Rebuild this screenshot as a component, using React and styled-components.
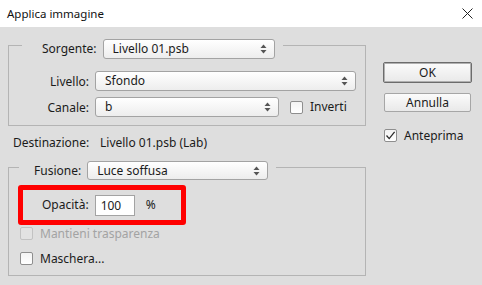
import React from "react";
import styled, { createGlobalStyle } from "styled-components";

const GlobalStyle = createGlobalStyle`
  html, body {
    margin: 0;
    padding: 0;
  }
  body {
    background: #dedede;
    font-family: "Noto Sans", "DejaVu Sans", sans-serif;
    font-size: 12px;
    color: #1b1b1b;
  }
`;

const Dialog = styled.div`
  width: 482px;
  height: 285px;
  background: #dedede;
  display: flex;
  flex-direction: column;
  overflow: hidden;
`;

const TitleBar = styled.div`
  height: 27px;
  flex-shrink: 0;
  box-sizing: border-box;
  background: #ffffff;
  display: flex;
  align-items: center;
  justify-content: space-between;
  padding: 0 9px 1px 7px;
  font-size: 11.5px;
  color: #111;
`;

const Body = styled.div`
  display: flex;
  gap: 17px;
  padding: 12px 0 0 8px;
`;

const LeftColumn = styled.div`
  width: 358px;
  display: flex;
  flex-direction: column;
`;

const RightColumn = styled.div`
  display: flex;
  flex-direction: column;
  align-items: flex-start;
  padding-top: 23px;
`;

const Group = styled.fieldset`
  margin: 0;
  min-width: 0;
  width: 358px;
  box-sizing: border-box;
  border: 1px solid #b4b4b4;
  padding: 0 8px ${(p) => p.$bottom}px ${(p) => p.$left}px;
`;

const Legend = styled.legend`
  height: 12px;
  display: flex;
  align-items: flex-start;
  gap: 6px;
  padding: 0 8px 0 ${(p) => p.$indent}px;
`;

const Label = styled.span`
  line-height: ${(p) => p.$h || 20}px;
  white-space: nowrap;
  color: ${(p) => (p.$disabled ? "#a3a3a3" : "#1b1b1b")};
`;

const SelectBox = styled.div`
  width: ${(p) => p.$w}px;
  height: ${(p) => p.$h || 20}px;
  box-sizing: border-box;
  flex-shrink: 0;
  border: 1px solid #a3a3a3;
  border-radius: 3px;
  background: linear-gradient(#ffffff, #ededed);
  display: flex;
  align-items: center;
  justify-content: space-between;
  padding: 0 7px 0 9px;
  line-height: 1;
`;

const Fields = styled.div`
  display: grid;
  grid-template-columns: 67px auto;
  column-gap: 6px;
  row-gap: 6px;
  align-items: center;
  margin-top: 20px;
`;

const FieldLabel = styled.span`
  text-align: right;
  white-space: nowrap;
`;

const Inline = styled.div`
  display: flex;
  align-items: center;
  gap: ${(p) => p.$gap}px;
`;

const DestRow = styled.div`
  display: flex;
  line-height: 15px;
  margin: 9px 0 11px 5px;
`;

const DestLabel = styled.span`
  width: 87px;
`;

const Highlight = styled.div`
  width: 168px;
  height: 40px;
  box-sizing: border-box;
  margin: 12px 0 0 -1px;
  border: 5px solid #ff0000;
  border-radius: 3px;
  display: flex;
  align-items: center;
  padding-left: 19px;
`;

const NumberInput = styled.div`
  width: 40px;
  height: 21px;
  box-sizing: border-box;
  margin: 0 11px 0 6px;
  border: 1px solid #a3a3a3;
  background: #ffffff;
  padding-left: 5px;
  display: flex;
  align-items: center;
`;

const CheckRow = styled.div`
  height: 13px;
  display: flex;
  align-items: center;
  gap: 7px;
  margin: ${(p) => p.$top}px 0 0 ${(p) => p.$left || 0}px;
`;

const Box = styled.div`
  width: 13px;
  height: 13px;
  box-sizing: border-box;
  flex-shrink: 0;
  border: 1px solid ${(p) => (p.$disabled ? "#c2c2c2" : "#8e8e8e")};
  border-radius: 2px;
  background: ${(p) =>
    p.$disabled ? "#e2e2e2" : "linear-gradient(#f3f3f3, #ffffff)"};
  display: flex;
  align-items: center;
  justify-content: center;
`;

const Button = styled.div`
  width: ${(p) => (p.$default ? 89 : 87)}px;
  height: ${(p) => (p.$default ? 21 : 19)}px;
  box-sizing: border-box;
  margin: ${(p) => (p.$default ? "0" : "10px 0 0 1px")};
  border: 1px solid ${(p) => (p.$default ? "#6c6c6c" : "#a6a6a6")};
  box-shadow: ${(p) => (p.$default ? "inset 0 0 0 1px #b0b0b0" : "none")};
  border-radius: 2px;
  background: linear-gradient(#fbfbfb, #e9e9e9);
  display: flex;
  align-items: center;
  justify-content: center;
  padding-bottom: 1px;
`;

const Arrows = () => (
  <svg width="7" height="10" viewBox="0 0 7 10">
    <path d="M3.5 0.5 L6.5 4 H0.5 Z" fill="#555" />
    <path d="M3.5 9.5 L6.5 6 H0.5 Z" fill="#555" />
  </svg>
);

const Select = ({ w, h, children }) => (
  <SelectBox $w={w} $h={h}>
    <span>{children}</span>
    <Arrows />
  </SelectBox>
);

const Checkbox = ({ checked, disabled }) => (
  <Box $disabled={disabled}>
    {checked && (
      <svg width="11" height="11" viewBox="0 0 11 11">
        <path d="M1.5 5.5 L4.2 8.6 L9.6 1.8" fill="none" stroke="#2a2a2a" strokeWidth="1.3" />
      </svg>
    )}
  </Box>
);

const CloseIcon = () => (
  <svg width="11" height="11" viewBox="0 0 11 11">
    <path d="M0.5 0.5 L10.5 10.5 M10.5 0.5 L0.5 10.5" stroke="#222" strokeWidth="1" />
  </svg>
);

export default function App() {
  return (
    <>
      <GlobalStyle />
      <Dialog>
        <TitleBar>
          <span>Applica immagine</span>
          <CloseIcon />
        </TitleBar>
        <Body>
          <LeftColumn>
            <Group $left={13} $bottom={8}>
              <Legend $indent={20}>
                <Label>Sorgente:</Label>
                <Select w={172}>Livello 01.psb</Select>
              </Legend>
              <Fields>
                <FieldLabel>Livello:</FieldLabel>
                <Select w={261}>Sfondo</Select>
                <FieldLabel>Canale:</FieldLabel>
                <Inline $gap={11}>
                  <Select w={184}>b</Select>
                  <CheckRow $top={0}>
                    <Checkbox />
                    <Label>Inverti</Label>
                  </CheckRow>
                </Inline>
              </Fields>
            </Group>

            <DestRow>
              <DestLabel>Destinazione:</DestLabel>
              <span>Livello 01.psb (Lab)</span>
            </DestRow>

            <Group $left={10} $bottom={10}>
              <Legend $indent={15}>
                <Label $h={19}>Fusione:</Label>
                <Select w={181} h={19}>Luce soffusa</Select>
              </Legend>
              <Highlight>
                <Label>Opacità:</Label>
                <NumberInput>100</NumberInput>
                <Label>%</Label>
              </Highlight>
              <CheckRow $top={2} $left={1}>
                <Checkbox disabled />
                <Label $disabled>Mantieni trasparenza</Label>
              </CheckRow>
              <CheckRow $top={12} $left={1}>
                <Checkbox />
                <Label>Maschera...</Label>
              </CheckRow>
            </Group>
          </LeftColumn>

          <RightColumn>
            <Button $default>OK</Button>
            <Button>Annulla</Button>
            <CheckRow $top={17} $left={1}>
              <Checkbox checked />
              <Label>Anteprima</Label>
            </CheckRow>
          </RightColumn>
        </Body>
      </Dialog>
    </>
  );
}
